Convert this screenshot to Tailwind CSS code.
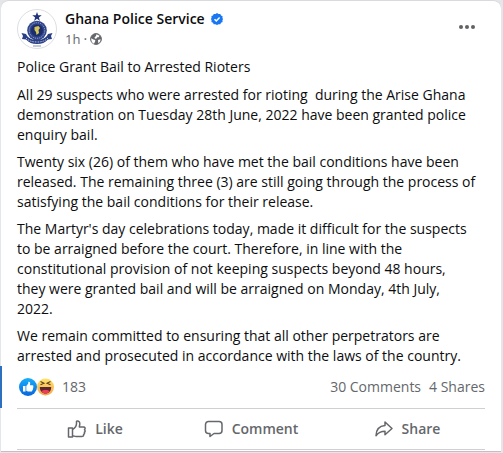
<!DOCTYPE html>
<html lang="en">
<head>
<meta charset="utf-8">
<meta name="viewport" content="width=device-width, initial-scale=1">
<title>Ghana Police Service</title>
<script src="https://cdn.jsdelivr.net/npm/@tailwindcss/browser@4"></script>
</head>
<body class="bg-[#e4e6e9] font-['Open_Sans','Noto_Sans',sans-serif] text-sm leading-5 text-[#0c0d0f]">
<article class="mr-[2px] ml-px rounded-t-lg border-t border-[#d8dadd] bg-white">
  <header class="flex items-start gap-2 pt-2 pr-[22px] pl-4">
    <svg class="size-10 shrink-0" viewBox="0 0 40 40" role="img" aria-label="Ghana Police Service crest">
      <circle cx="20" cy="20" r="19.5" fill="#fff" stroke="#dcdee2"/>
      <path d="M20 3l1.200 3.300h3.500l-2.800 2.200 1 3.500-2.900-2.200-2.900 2.200 1-3.500-2.800-2.200h3.500z" fill="#20337c"/>
      <circle cx="20" cy="21.500" r="9.800" fill="#2f4489"/>
      <circle cx="20" cy="21.500" r="7.800" fill="none" stroke="#a3aed4" stroke-dasharray="1.200 1"/>
      <circle cx="20" cy="21.500" r="6" fill="#1c2d6b"/>
      <path d="M17.500 18l4-1 1.500 2-1.500 2 .5 3-2.500 2-.5-3-1.500-2z" fill="#d9c65a"/>
      <path d="M4.500 24l4.500 1c2 4 6 6 11 6s9-2 11-6l4.500-1-1.500 3 1 3-4 .5c-3 3-6 4.500-11 4.500s-8-1.500-11-4.500l-4-.5 1-3z" fill="#2a3e84"/>
      <path d="M9 29c3 3 6 4 11 4s8-1 11-4" fill="none" stroke="#b5bedc" stroke-dasharray="1.500 1"/>
      <path d="M16 37h8" stroke="#8793bb"/>
    </svg>
    <div class="min-w-0 flex-1">
      <div class="flex items-center gap-1.5">
        <a href="#" class="font-semibold text-[#0c0d0f]">Ghana Police Service</a>
        <svg class="size-3" viewBox="0 0 12 12" role="img" aria-label="Verified">
          <path d="M6 0l1.500 1 1.800-.1.700 1.600 1.600.8-.2 1.700.6 1-.6 1.500.2 1.500-1.600.8-.7 1.500-1.800-.1L6 12l-1.500-.8-1.800.1L2 9.800.4 9l.2-1.500L0 6l.6-1.500L.4 3 2 2.500 2.700.9 4.500 1z" fill="#1877f2"/>
          <path d="M3.500 6.200l1.800 1.700 3.300-3.500" fill="none" stroke="#fff" stroke-width="1.500"/>
        </svg>
      </div>
      <div class="flex items-center gap-1 text-[#65676b]">
        <a href="#" class="text-[13px]">1h</a><span class="-mx-px">·</span>
        <svg class="size-3" viewBox="0 0 12 12" role="img" aria-label="Public">
          <circle cx="6" cy="6" r="5.400" fill="#65676b" stroke="#65676b"/>
          <path d="M6.500 1.200l3 1.500-.8 1.500-1.400.1-.8 1.200L5 5.700l-.5-1.500 1.300-1zM1.200 5.200l2.200 1.300 1.900.5-.2 1.500-1.100 2.300C2 9.800 1 7.600 1.200 5.200zM8 7l2.600-.8C10.500 8 9.600 9.500 8.300 10.300z" fill="#fff"/>
        </svg>
      </div>
    </div>
    <button type="button" aria-label="Actions for this post" class="mt-2 flex h-5 w-6 items-center justify-center">
      <svg class="size-5" viewBox="0 0 20 20" fill="#606266"><circle cx="4" cy="10" r="2"/><circle cx="10" cy="10" r="2"/><circle cx="16" cy="10" r="2"/></svg>
    </button>
  </header>

  <div class="pt-2 pr-[23px] pl-4">
    <h1 class="mb-2">Police Grant Bail to Arrested Rioters</h1>
    <div class="space-y-[7px]">
      <p>All 29 suspects who were arrested for rioting &nbsp;during the Arise Ghana demonstration on Tuesday 28th June, 2022 have been granted police enquiry bail.</p>
      <p>Twenty six (26) of them who have met the bail conditions have been released. The remaining three (3) are still going through the process of satisfying the bail conditions for their release.</p>
      <p>The Martyr's day celebrations today, made it difficult for the suspects to be arraigned before the court. Therefore, in line with the constitutional provision of not keeping suspects beyond 48 hours, they&nbsp;were granted bail and will be arraigned on Monday, 4th July, 2022.</p>
      <p>We remain committed to ensuring that all other perpetrators are arrested and prosecuted in accordance with the laws of the country.</p>
    </div>
  </div>

  <footer class="text-[#65676b]">
    <div class="-ml-px flex h-[42px] items-center border-l-2 border-[#2f6fc0] pr-4 pl-4">
      <svg class="h-5 w-9 shrink-0" viewBox="0 0 36 20" role="img" aria-label="Like and Haha reactions">
        <defs>
          <linearGradient id="like" x2="0" y2="1"><stop stop-color="#18aefb"/><stop offset="1" stop-color="#0866dc"/></linearGradient>
          <linearGradient id="haha" x2="0" y2="1"><stop stop-color="#ffe36a"/><stop offset="1" stop-color="#f5a54b"/></linearGradient>
        </defs>
        <circle cx="27.500" cy="10" r="8.500" fill="url(#haha)"/>
        <path d="M22.500 4.500l3.500 1.800-3.500 1.500M32.500 4.500l-3.500 1.800 3.500 1.500" fill="none" stroke="#5d4128" stroke-width="1.100"/>
        <path d="M21.800 10h11.400c0 4-2.300 6.500-5.700 6.500s-5.700-2.500-5.700-6.500z" fill="#5a2430"/>
        <path d="M23.300 14.300c1.800-1.800 6.600-1.800 8.400 0-1 1.400-2.400 2.200-4.200 2.200s-3.200-.8-4.200-2.200z" fill="#f23b58"/>
        <circle cx="10" cy="10" r="9" fill="url(#like)"/>
        <path d="M5 9h2.500v5.500H5zM8.300 9l2-2.500V4.700c1.800-.4 2.300 1.200 1.600 3.500h2.600c1 .1 1.200 1.100.6 1.700.5.600.3 1.300-.2 1.600.3.700 0 1.200-.5 1.500 0 1-.6 1.500-1.400 1.500H10l-1.700-.8z" fill="#fff"/>
      </svg>
      <span class="ml-2">183</span>
      <a href="#" class="ml-auto">30 Comments</a>
      <a href="#" class="ml-2">4 Shares</a>
    </div>
    <div class="mx-4 grid grid-cols-3 border-y border-[#ced0d4] font-semibold">
      <button type="button" class="flex h-10 items-center justify-center gap-2">
        <svg class="size-5" viewBox="0 0 20 20" fill="none" stroke="#65676b" stroke-width="1.500" stroke-linejoin="round"><path d="M1.500 9h4v9h-4zM5.500 10.500c2.500-1.500 4-3.500 4-6V2.200c2.500-.6 3.500 1 3.300 3l-.5 2.800h4.200c1.700 0 2.200 1.700 1 2.700 1 .9.800 2-.2 2.500.6 1 .2 1.900-.7 2.300.2 1.200-.5 2-1.800 2H9c-1.500 0-2-.8-3.500-.8"/></svg>
        Like
      </button>
      <button type="button" class="flex h-10 items-center justify-center gap-2">
        <svg class="size-5" viewBox="0 0 20 20" fill="none" stroke="#65676b" stroke-width="1.500" stroke-linejoin="round"><path d="M4.500 2.500h10.500a3 3 0 0 1 3 3v6a3 3 0 0 1-3 3H10l-4 3v-3H4.500a3 3 0 0 1-3-3v-6a3 3 0 0 1 3-3z"/></svg>
        Comment
      </button>
      <button type="button" class="flex h-10 items-center justify-center gap-2">
        <svg class="size-5" viewBox="0 0 20 20" fill="none" stroke="#65676b" stroke-width="1.500" stroke-linejoin="round"><path d="M11 3l7 6.500-7 6.200v-3.500c-4 0-6.500 1-9 4.500.2-6 3.500-9.800 9-10.200z"/></svg>
        Share
      </button>
    </div>
    <div class="mt-px border-t border-[#cdb9bf]"></div>
  </footer>
</article>
</body>
</html>
